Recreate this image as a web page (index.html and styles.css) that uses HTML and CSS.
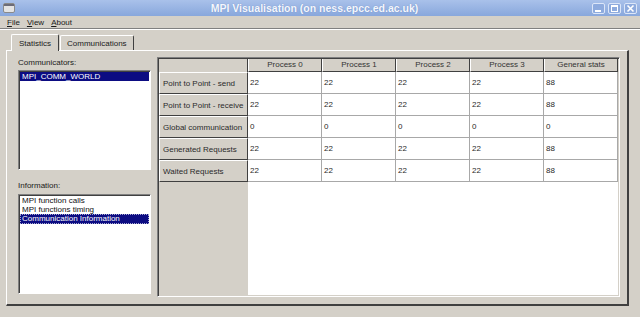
FILE: index.html
```html
<!DOCTYPE html>
<html lang="en">
<head>
    <meta charset="UTF-8">
    <title>MPI Visualisation (on ness.epcc.ed.ac.uk)</title>
    <link rel="stylesheet" href="styles.css">
</head>
<body>
    <div id="titlebar">
        <svg class="appIcon" width="12" height="10" viewBox="0 0 12 10">
            <rect x="0.5" y="0.5" width="11" height="9" rx="1.5" fill="#e4e4e4" stroke="#8a8a8a"/>
            <rect x="1" y="1" width="10" height="2" fill="#6c6c78"/>
        </svg>
        <div class="title">MPI Visualisation (on ness.epcc.ed.ac.uk)</div>
        <div class="winButtons">
            <div class="winBtn">
                <svg width="11" height="9" viewBox="0 0 11 9"><rect x="2" y="6" width="6" height="2" fill="#fff"/></svg>
            </div>
            <div class="winBtn">
                <svg width="11" height="9" viewBox="0 0 11 9"><rect x="2.5" y="1.5" width="6" height="6" fill="none" stroke="#fff"/><rect x="2" y="1" width="7" height="2" fill="#fff"/></svg>
            </div>
            <div class="winBtn">
                <svg width="11" height="9" viewBox="0 0 11 9"><path d="M2.5 1.5 L8.5 7.5 M8.5 1.5 L2.5 7.5" stroke="#fff" stroke-width="1.6"/></svg>
            </div>
        </div>
    </div>

    <div id="menubar">
        <span><u>F</u>ile</span>
        <span><u>V</u>iew</span>
        <span><u>A</u>bout</span>
    </div>

    <div id="tabs">
        <div class="tab selected">Statistics</div>
        <div class="tab">Communications</div>
    </div>

    <div id="panel">
        <div id="leftColumn">
            <div class="label">Communicators:</div>
            <div class="listbox">
                <div class="item selected">MPI_COMM_WORLD</div>
            </div>
            <div class="label second">Information:</div>
            <div class="listbox">
                <div class="item">MPI function calls</div>
                <div class="item">MPI functions timing</div>
                <div class="item selected focused">Communication Information</div>
            </div>
        </div>

        <div id="tableFrame">
            <div id="statsGrid">
                <div class="corner"></div>
                <div class="colHead">Process 0</div>
                <div class="colHead">Process 1</div>
                <div class="colHead">Process 2</div>
                <div class="colHead">Process 3</div>
                <div class="colHead">General stats</div>

                <div class="rowHead">Point to Point - send</div>
                <div class="cell">22</div><div class="cell">22</div><div class="cell">22</div><div class="cell">22</div><div class="cell">88</div>

                <div class="rowHead">Point to Point - receive</div>
                <div class="cell">22</div><div class="cell">22</div><div class="cell">22</div><div class="cell">22</div><div class="cell">88</div>

                <div class="rowHead">Global communication</div>
                <div class="cell">0</div><div class="cell">0</div><div class="cell">0</div><div class="cell">0</div><div class="cell">0</div>

                <div class="rowHead">Generated Requests</div>
                <div class="cell">22</div><div class="cell">22</div><div class="cell">22</div><div class="cell">22</div><div class="cell">88</div>

                <div class="rowHead">Waited Requests</div>
                <div class="cell">22</div><div class="cell">22</div><div class="cell">22</div><div class="cell">22</div><div class="cell">88</div>
            </div>
        </div>
    </div>
</body>
</html>
```

FILE: styles.css
```css
* {
    box-sizing: border-box;
}

body {
    margin: 0;
    width: 640px;
    height: 317px;
    overflow: hidden;
    background: #d4d0c8;
    font-family: "Liberation Sans", Arial, sans-serif;
    font-size: 8px;
    color: #1a1a1a;
}

/* window title bar */
#titlebar {
    height: 16px;
    display: flex;
    align-items: center;
    background: linear-gradient(#a9c1ea, #88a7dc);
}

.appIcon {
    margin-left: 3px;
}

.title {
    flex: 1;
    text-align: center;
    padding-left: 22px;
    color: #f4f7fd;
    font-weight: bold;
    font-size: 10.5px;
    text-shadow: 0 0 1px #6a88c0;
}

.winButtons {
    display: flex;
    gap: 3px;
    margin-right: 3px;
}

.winBtn {
    width: 13px;
    height: 11px;
    border: 1px solid #dce6f8;
    border-radius: 2px;
    background: #8eabde;
    display: flex;
    align-items: center;
    justify-content: center;
}

/* menu */
#menubar {
    height: 13px;
    display: flex;
    align-items: center;
    gap: 7px;
    padding-left: 7px;
    border-bottom: 1px solid #808080;
    box-shadow: 0 1px #fff;
}

/* tabs */
#tabs {
    display: flex;
    align-items: flex-end;
    height: 21px;
    padding-left: 11px;
}

.tab {
    height: 15px;
    padding: 3px 6px 0 6px;
    border-top: 1px solid #fff;
    border-left: 1px solid #fff;
    border-right: 1px solid #404040;
    border-radius: 2px 2px 0 0;
}

.tab.selected {
    height: 17px;
    position: relative;
    top: 1px;
    padding: 4px 7px 0 7px;
    background: #d4d0c8;
    z-index: 1;
}

.tab + .tab {
    margin-left: 1px;
}

/* tab page */
#panel {
    height: 256px;
    margin: 0 11px 0 6px;
    display: flex;
    padding: 6px 7px 7px 11px;
    border-top: 1px solid #fff;
    border-left: 1px solid #fff;
    border-right: 2px solid #404040;
    border-bottom: 2px solid #404040;
}

#leftColumn {
    width: 133px;
    margin-right: 6px;
}

.label {
    height: 13px;
    padding-top: 1px;
}

.label.second {
    height: 24px;
    padding-top: 11px;
}

.listbox {
    height: 100px;
    background: #fff;
    padding: 1px;
    border: 1px solid;
    border-color: #808080 #fff #fff #808080;
    box-shadow: inset 1px 1px #404040;
}

.item {
    height: 9px;
    line-height: 9px;
    padding-left: 2px;
    white-space: nowrap;
    color: #111;
}

.item.selected {
    background: #0c0c82;
    color: #fff;
}

.item.focused {
    height: 10px;
    line-height: 8px;
    padding-left: 1px;
    border: 1px dotted #a8a8d0;
}

/* statistics table */
#tableFrame {
    width: 463px;
    height: 240px;
    border: 1px solid;
    border-color: #808080 #fff #fff #808080;
    box-shadow: inset 1px 1px #404040, inset -1px -1px #d4d0c8;
    padding: 1px;
    background: linear-gradient(to right, #d4d0c8 90px, #fff 90px);
    background-clip: content-box;
}

#statsGrid {
    display: grid;
    grid-template-columns: 89px repeat(5, 74px);
    grid-template-rows: 13px repeat(5, 22px);
}

.corner {
    background: #d4d0c8;
    border-right: 1px solid #404040;
}

.colHead {
    background: #d4d0c8;
    text-align: center;
    line-height: 12px;
    color: #333;
    border-left: 1px solid #fff;
    border-right: 1px solid #404040;
    border-bottom: 1px solid #404040;
}

.rowHead {
    background: #d4d0c8;
    display: flex;
    align-items: center;
    padding-left: 3px;
    white-space: nowrap;
    color: #2a2a2a;
    border-top: 1px solid #fff;
    border-left: 1px solid #fff;
    border-right: 1px solid #404040;
    border-bottom: 1px solid #404040;
}

.cell {
    background: #fff;
    display: flex;
    align-items: center;
    padding-left: 2px;
    color: #2a2a2a;
    border-right: 1px solid #a8a8a8;
    border-bottom: 1px solid #a8a8a8;
}
```
